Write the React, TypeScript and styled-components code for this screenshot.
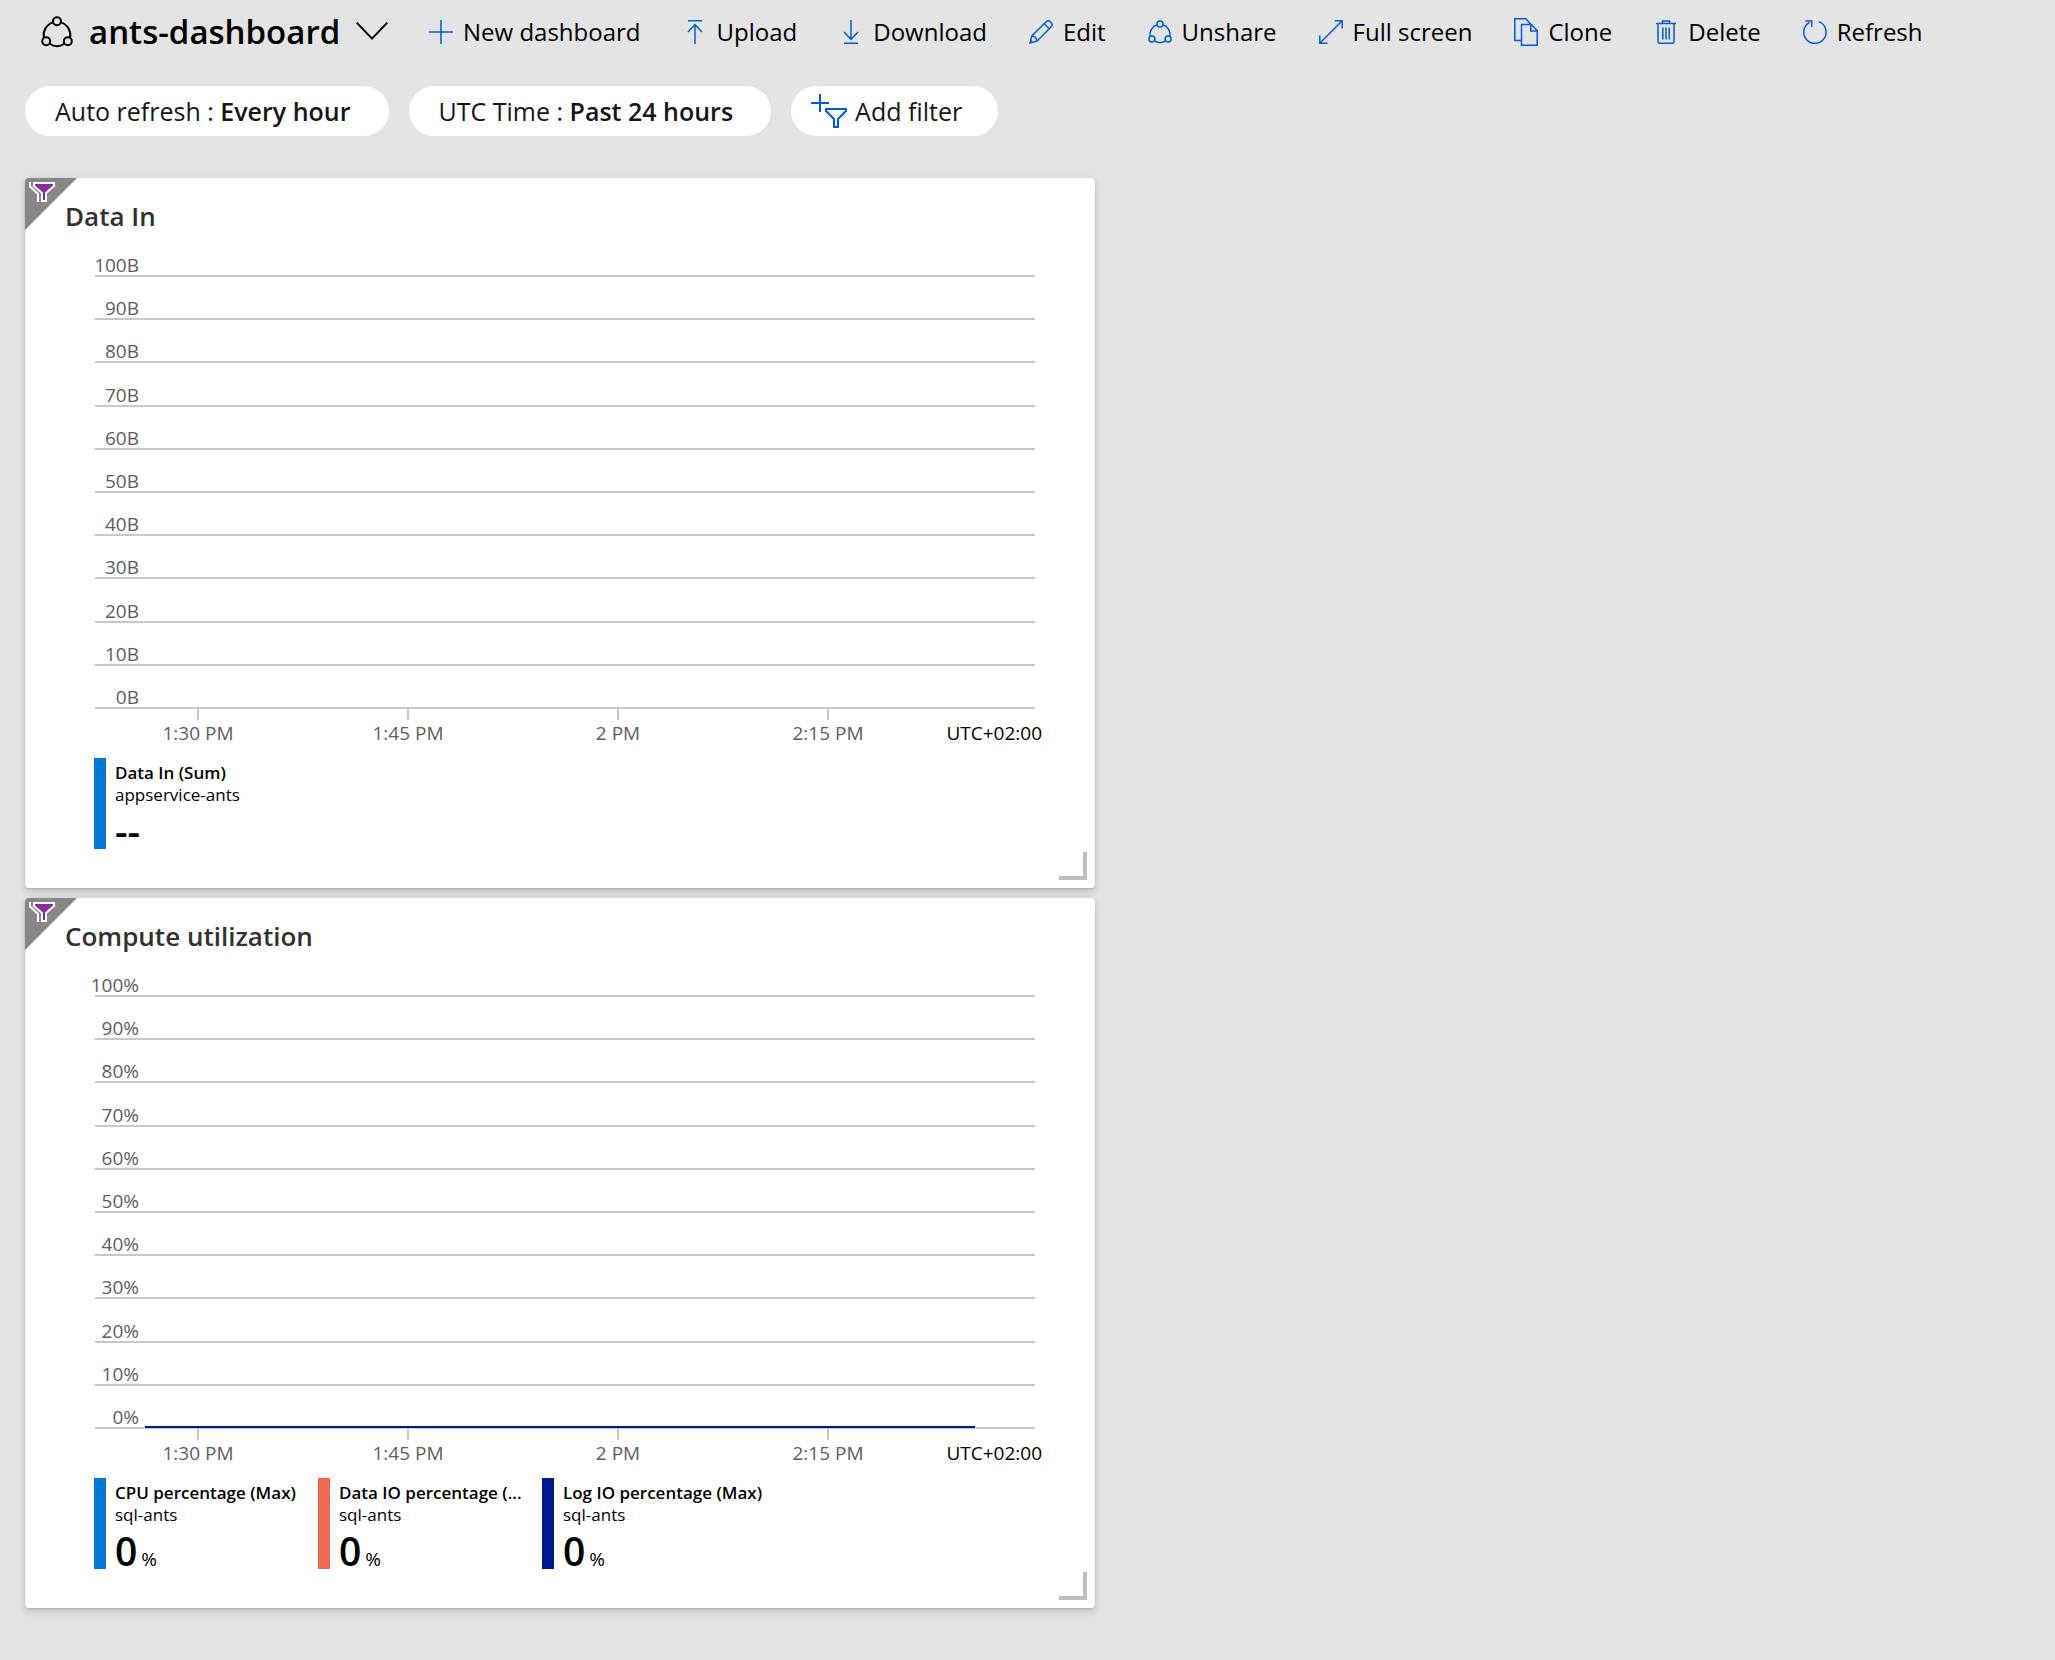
import React from "react";
import styled, { createGlobalStyle } from "styled-components";

const GlobalStyle = createGlobalStyle`
  *, *::before, *::after { box-sizing: border-box; }
  body {
    margin: 0;
    background: #e4e4e4;
    color: #000;
    font-family: "Open Sans", "Noto Sans", sans-serif;
  }
  h1, h2, p, dl, dt, dd, ul { margin: 0; padding: 0; }
  button {
    margin: 0;
    padding: 0;
    border: 0;
    background: none;
    color: inherit;
    font: inherit;
    cursor: pointer;
  }
  svg { display: block; flex: none; overflow: visible; }
`;

const Page = styled.div`
  min-height: 100vh;
  padding: 0 24px 52px 25px;
`;

const Header = styled.header`
  display: flex;
  align-items: center;
  height: 64px;
  padding-left: 16px;
`;

const TitleGroup = styled.div`
  display: flex;
  align-items: center;
  gap: 16px;
  width: 388px;
  flex: none;
`;

const PageTitle = styled.h1`
  font-size: 33px;
  line-height: 48px;
  font-weight: 600;
  white-space: nowrap;
`;

const Toolbar = styled.nav`
  display: flex;
  align-items: center;
  gap: 42px;
`;

const Command = styled.button`
  display: flex;
  align-items: center;
  gap: 10px;
  font-size: 24px;
  line-height: 32px;
  white-space: nowrap;
`;

const Filters = styled.div`
  display: flex;
  gap: 20px;
  padding: 22px 0 42px;
`;

const Pill = styled.button<{ $icon?: boolean }>`
  display: flex;
  align-items: center;
  gap: 8px;
  height: 50px;
  padding: ${(p) => (p.$icon ? "0 36px 0 20px" : "0 38px 0 30px")};
  border-radius: 25px;
  background: #fff;
  color: #161616;
  font-size: 25px;
  line-height: 32px;
  white-space: nowrap;
`;

const PillValue = styled.b`
  font-weight: 600;
`;

const Board = styled.main`
  display: grid;
  grid-template-columns: minmax(0, 1070px);
  gap: 10px;
`;

const Tile = styled.section`
  position: relative;
  padding: 22px 60px 39px 70px;
  border-radius: 4px;
  background: #fff;
  box-shadow: 0 3px 8px rgba(0, 0, 0, 0.18), 0 1px 2px rgba(0, 0, 0, 0.12);
`;

const Corner = styled.svg`
  position: absolute;
  top: 0;
  left: 0;
`;

const ResizeGrip = styled.span`
  position: absolute;
  right: 8px;
  bottom: 8px;
  width: 28px;
  height: 28px;
  border: solid #bebebe;
  border-width: 0 4px 4px 0;
`;

const TileTitle = styled.h2`
  margin-left: -30px;
  color: #323130;
  font-size: 26px;
  line-height: 32px;
  font-weight: 600;
`;

const Plot = styled.div`
  position: relative;
  display: grid;
  grid-template-rows: 45px repeat(10, minmax(0, 1fr));
  height: 477px;
`;

const GridRow = styled.div`
  display: flex;
  align-items: flex-end;
  border-bottom: 2px solid #c8c8c8;
`;

const ValueLabel = styled.span`
  display: flex;
  justify-content: flex-end;
  width: 44px;
  color: #605e5c;
  font-size: 19px;
  line-height: 20px;
  white-space: nowrap;
`;

const Series = styled.svg`
  position: absolute;
  left: 0;
  bottom: 0;
  width: 100%;
  height: 4px;
`;

const TimeAxis = styled.div`
  display: grid;
  grid-template-columns: repeat(4, minmax(0, 210fr)) minmax(0, 109fr);
  margin: 0 -7px 0 -2px;
  color: #605e5c;
  font-size: 19px;
  line-height: 24px;
`;

const Tick = styled.span`
  display: flex;
  flex-direction: column;
  align-items: center;
  gap: 1px;
  &::before {
    content: "";
    width: 2px;
    height: 11px;
    background: #c8c8c8;
  }
`;

const Zone = styled.span`
  justify-self: end;
  padding-top: 12px;
  color: #000;
  white-space: nowrap;
`;

const Legend = styled.dl`
  display: flex;
  margin: 13px 0 0 -1px;
`;

const LegendItem = styled.div<{ $color: string }>`
  min-width: 224px;
  height: 91px;
  padding: 4px 0 0 9px;
  border-left: 12px solid ${(p) => p.$color};
  white-space: nowrap;
`;

const Metric = styled.dt`
  font-size: 17px;
  line-height: 22px;
  font-weight: 600;
`;

const Resource = styled.dd`
  font-size: 17px;
  line-height: 22px;
`;

const Reading = styled.dd`
  display: flex;
  align-items: baseline;
  gap: 4px;
  font-size: 19px;
  line-height: 50px;
`;

const Amount = styled.strong`
  font-size: 39px;
  font-weight: 600;
`;

const BLUE = "#015cda";

type IconProps = { children: React.ReactNode; size?: number; color?: string; width?: number };

const Icon = ({ children, size = 24, color = BLUE, width = 1.5 }: IconProps) => (
  <svg width={size} height={size} viewBox="0 0 24 24" fill="none" stroke={color} strokeWidth={width} aria-hidden="true">
    {children}
  </svg>
);

const shareShape = (
  <>
    <circle cx="12" cy="3.9" r="3" />
    <circle cx="3.9" cy="19" r="3" />
    <circle cx="20.1" cy="19" r="3" />
    <path d="M9.1 4.8A10 10 0 0 0 2.2 16.4M14.9 4.8a10 10 0 0 1 6.9 11.6M6.5 20.8a10 10 0 0 0 11 0" />
  </>
);

const commands = [
  { label: "New dashboard", icon: <path d="M12 0v24M0 12h24" /> },
  { label: "Upload", icon: <path d="M5 .8h14M12 24V5M5 12l7-7.3 7 7.3" /> },
  { label: "Download", icon: <path d="M5 23.2h14M12 0v19M5 12l7 7.3 7-7.3" /> },
  {
    label: "Edit",
    icon: <path d="M1 23l1.8-7L17.2 1.8a2.9 2.9 0 0 1 4.1 0l.9.9a2.9 2.9 0 0 1 0 4.1L8 21.2 1 23zM15.3 3.8l4.9 4.9M2.8 16c2.7.2 4.9 2.3 5.2 5.2M1.6 20.6l1.8 1.8" />,
  },
  { label: "Unshare", icon: shareShape },
  { label: "Full screen", icon: <path d="M1 23L23 1M15.5.8h7.7v7.7M.8 15.5v7.7h7.7" /> },
  {
    label: "Clone",
    icon: <path d="M7.5 20.5H.8V-1.2h11l5 5.4M7.5 4.5h9.7l6 6v14.7H7.5zM16.8 4.5V11h6.4" />,
  },
  {
    label: "Delete",
    icon: <path d="M2 3.5h20M8.5 3.5V1h7v2.5M4 3.5v18.2c0 1 .5 1.5 1.5 1.5h13c1 0 1.5-.5 1.5-1.5V3.5M8.8 7.5v12M12 7.5v12M15.2 7.5v12" />,
  },
  { label: "Refresh", icon: <path d="M15.8 1.6A11.2 11.2 0 1 1 6.5 2.3M2.3 1h6.5v6" /> },
];

type Item = { name: string; resource: string; value: string; unit?: string; color: string };
type Chart = { title: string; unit: string; line?: string; legend: Item[] };

const charts: Chart[] = [
  {
    title: "Data In",
    unit: "B",
    legend: [{ name: "Data In (Sum)", resource: "appservice-ants", value: "--", color: "#0078d4" }],
  },
  {
    title: "Compute utilization",
    unit: "%",
    line: "#00188f",
    legend: [
      { name: "CPU percentage (Max)", resource: "sql-ants", value: "0", unit: "%", color: "#0078d4" },
      { name: "Data IO percentage (...", resource: "sql-ants", value: "0", unit: "%", color: "#ef6950" },
      { name: "Log IO percentage (Max)", resource: "sql-ants", value: "0", unit: "%", color: "#00188f" },
    ],
  },
];

const levels = [100, 90, 80, 70, 60, 50, 40, 30, 20, 10, 0];
const times = ["1:30 PM", "1:45 PM", "2 PM", "2:15 PM"];

const ChartTile = ({ title, unit, line, legend }: Chart) => (
  <Tile aria-label={title}>
    <Corner width="52" height="52" viewBox="0 0 52 52" aria-hidden="true">
      <path d="M4 0H52L0 52V4A4 4 0 0 1 4 0Z" fill="#8a8886" />
      <path d="M5 4v4.5l8 7.5v8" fill="none" stroke="#fff" strokeWidth="2" />
      <path d="M9 5h20v3l-8 7v8h-4v-8L9 8z" fill="#892ba3" stroke="#fff" strokeWidth="2" />
    </Corner>
    <TileTitle>{title}</TileTitle>
    <Plot>
      {levels.map((n) => (
        <GridRow key={n}>
          <ValueLabel>
            {n}
            {unit}
          </ValueLabel>
        </GridRow>
      ))}
      {line && (
        <Series viewBox="0 0 940 4" preserveAspectRatio="none" aria-hidden="true">
          <path d="M50 2H880" stroke={line} strokeWidth="2" />
        </Series>
      )}
    </Plot>
    <TimeAxis>
      {times.map((t) => (
        <Tick key={t}>{t}</Tick>
      ))}
      <Zone>UTC+02:00</Zone>
    </TimeAxis>
    <Legend>
      {legend.map((item) => (
        <LegendItem key={item.name} $color={item.color}>
          <Metric>{item.name}</Metric>
          <Resource>{item.resource}</Resource>
          <Reading>
            <Amount>{item.value}</Amount>
            {item.unit}
          </Reading>
        </LegendItem>
      ))}
    </Legend>
    <ResizeGrip />
  </Tile>
);

export default function App() {
  return (
    <>
      <GlobalStyle />
      <Page>
        <Header>
          <TitleGroup>
            <Icon size={32} color="#000">
              {shareShape}
            </Icon>
            <PageTitle>ants-dashboard</PageTitle>
            <button type="button" aria-label="Switch dashboard">
              <Icon size={32} color="#000">
                <path d="M.5 5L12 17 23.5 5" />
              </Icon>
            </button>
          </TitleGroup>
          <Toolbar aria-label="Dashboard commands">
            {commands.map((c) => (
              <Command key={c.label} type="button">
                <Icon>{c.icon}</Icon>
                {c.label}
              </Command>
            ))}
          </Toolbar>
        </Header>
        <Filters>
          <Pill type="button">
            <span>
              Auto refresh : <PillValue>Every hour</PillValue>
            </span>
          </Pill>
          <Pill type="button">
            <span>
              UTC Time : <PillValue>Past 24 hours</PillValue>
            </span>
          </Pill>
          <Pill type="button" $icon>
            <svg width="36" height="34" viewBox="0 0 36 34" fill="none" stroke={BLUE} strokeWidth="2" aria-hidden="true">
              <path d="M9 0v18M0 9h18M15 15h20v2l-8 8v8h-4v-8l-8-8z" />
            </svg>
            Add filter
          </Pill>
        </Filters>
        <Board>
          {charts.map((c) => (
            <ChartTile key={c.title} {...c} />
          ))}
        </Board>
      </Page>
    </>
  );
}
